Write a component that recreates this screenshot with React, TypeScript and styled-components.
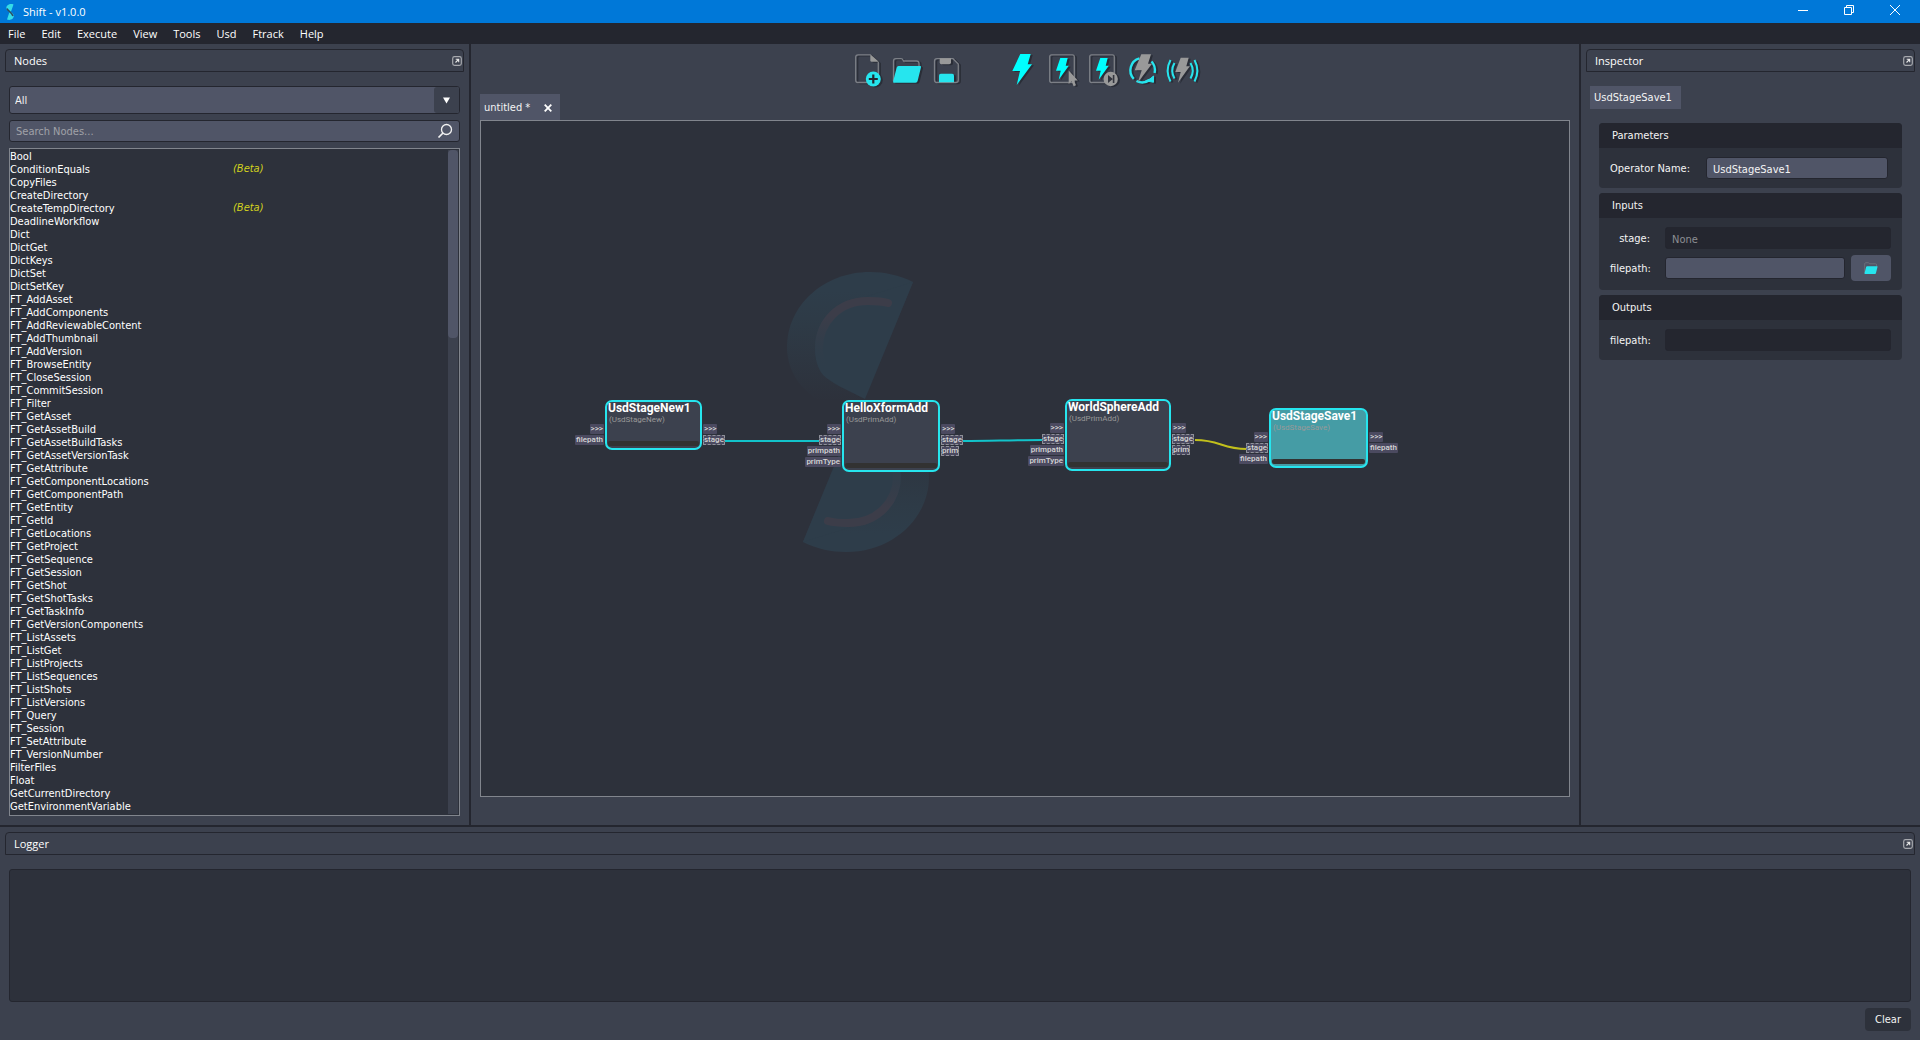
import React from "react";
import styled, { createGlobalStyle, css } from "styled-components";

const c = {
  panel: "#3c414e",
  dark: "#24262f",
  well: "#2d313b",
  field: "#505567",
  line: "#81858d",
  cyan: "#26e5ee",
  neon: "#00ffff",
  grey: "#999999",
  outline: "#7c7f86",
  text: "#f4f4f4",
};
const uiFont = `"Open Sans", "Noto Sans", sans-serif`;
const formFont = `"DejaVu Sans Condensed", "DejaVu Sans", sans-serif`;
const nodeFont = `Roboto, sans-serif`;

const Global = createGlobalStyle`
  *, *::before, *::after { box-sizing: border-box; }
  body { margin: 0; background: ${c.panel}; }
  button, input, select, textarea { font: inherit; color: inherit; margin: 0; }
  button { cursor: pointer; }
`;

const Window = styled.div`
  display: grid;
  grid-template-rows: auto auto minmax(0, 1fr) auto;
  height: 100vh;
  background: ${c.panel};
  color: ${c.text};
  font: 11px/16px ${formFont};
`;

/* ---------- window chrome ---------- */
const TitleBar = styled.header`
  display: flex;
  align-items: center;
  height: 23px;
  padding: 0 2px 0 4px;
  background: #0078d8;
  font: 11px/16px ${uiFont};
`;
const AppTitle = styled.h1`
  flex: 1;
  margin: 0 0 0 7px;
  font: inherit;
  color: #ffffff;
`;
const WindowButton = styled.button`
  display: grid;
  place-items: center;
  align-self: flex-start;
  width: 46px;
  height: 20px;
  padding: 0;
  border: 0;
  background: transparent;
`;
const MenuBar = styled.nav`
  display: flex;
  height: 21px;
  background: ${c.dark};
`;
const MenuItem = styled.button`
  padding: 0 8px;
  border: 0;
  background: transparent;
  font: 11px/20px ${uiFont};
  color: #ffffff;
`;

/* ---------- docks ---------- */
const Workspace = styled.div`
  display: grid;
  grid-template-columns: 471px minmax(0, 1fr) 341px;
  min-height: 0;
  border-bottom: 2px solid ${c.dark};
`;
const Dock = styled.section<{ $edge?: "left" | "right" }>`
  display: flex;
  flex-direction: column;
  min-width: 0;
  min-height: 0;
  padding: 5px;
  ${(p) => p.$edge === "left" && css`border-right: 2px solid ${c.dark};`}
  ${(p) => p.$edge === "right" && css`border-left: 2px solid ${c.dark};`}
`;
const DockHeader = styled.div`
  display: flex;
  align-items: center;
  justify-content: space-between;
  flex: none;
  height: 23px;
  padding: 0 1px 0 8px;
  border: 1px solid ${c.dark};
  border-radius: 4px 4px 0 0;
`;
const DockTitle = styled.h2`
  margin: 0;
  padding-top: 1px;
  font: 11px/16px ${uiFont};
  color: #ffffff;
`;
const FloatButton = styled.button`
  display: block;
  padding: 0;
  border: 0;
  background: transparent;
  line-height: 0;
`;

/* ---------- node browser ---------- */
const Browser = styled.div`
  display: flex;
  flex-direction: column;
  flex: 1;
  gap: 6px;
  min-height: 0;
  padding: 14px 4px 4px;
`;
const Combo = styled.div`
  display: grid;
  grid-template-columns: minmax(0, 1fr) 25px;
  height: 28px;
  border: 1px solid ${c.dark};
  border-radius: 3px;
  background: ${c.field};
  overflow: hidden;
`;
const ComboSelect = styled.select`
  grid-area: 1 / 1 / 2 / 3;
  padding: 1px 5px 0;
  border: 0;
  background: transparent;
  appearance: none;
`;
const ComboArrow = styled.span`
  grid-area: 1 / 2;
  display: grid;
  place-items: center;
  border-radius: 3px 0 0 3px;
  background: ${c.panel};
  pointer-events: none;
`;
const SearchBox = styled.div`
  display: flex;
  align-items: center;
  height: 22px;
  padding-right: 6px;
  border: 1px solid ${c.dark};
  border-radius: 3px;
  background: ${c.field};
`;
const SearchInput = styled.input`
  flex: 1;
  min-width: 0;
  padding: 2px 6px 0;
  border: 0;
  outline: 0;
  background: transparent;
  &::placeholder { color: #a0a2a8; opacity: 1; }
`;
const ListFrame = styled.div`
  display: flex;
  flex: 1;
  min-height: 0;
  border: 1px solid ${c.line};
  background: ${c.well};
`;
const NodeList = styled.ul`
  flex: 1;
  margin: 0;
  padding: 1px 0 0;
  overflow: hidden;
  list-style: none;
  line-height: 14px;
`;
const NodeRow = styled.li`
  display: grid;
  grid-template-columns: 223px 1fr;
  height: 13px;
  white-space: nowrap;
  color: #ffffff;
`;
const Beta = styled.em`
  color: #d2d21e;
  line-height: 12px;
`;
const ScrollTrack = styled.div`
  flex: none;
  width: 10px;
  margin: 1px;
  background: ${c.panel};
`;
const ScrollThumb = styled.div`
  height: 188px;
  border-radius: 4px;
  background: ${c.field};
`;

/* ---------- editor ---------- */
const Editor = styled.main`
  display: flex;
  flex-direction: column;
  min-width: 0;
  padding: 6px 9px 28px;
`;
const Toolbar = styled.div`
  display: flex;
  justify-content: center;
  gap: 34px;
`;
const ToolGroup = styled.div`
  display: flex;
`;
const ToolButton = styled.button`
  width: 40px;
  height: 40px;
  padding: 0;
  border: 0;
  background: transparent;
  line-height: 0;
  svg { filter: drop-shadow(2px 1px 0 rgba(20, 22, 28, 0.45)); }
`;
const Tabs = styled.div`
  display: flex;
  margin-top: 4px;
`;
const Tab = styled.div`
  display: flex;
  align-items: center;
  gap: 14px;
  height: 26px;
  padding: 1px 8px 0 4px;
  background: ${c.field};
`;
const TabClose = styled.button`
  display: block;
  padding: 0;
  border: 0;
  background: transparent;
  line-height: 0;
`;
const Canvas = styled.div`
  position: relative;
  flex: 1;
  min-height: 0;
  border: 1px solid ${c.line};
  background: ${c.well};
  overflow: hidden;
  font-family: ${nodeFont};
`;
const Scene = styled.svg`
  position: absolute;
  inset: 0;
  width: 100%;
  height: 100%;
`;
const GraphNode = styled.article<{ $x: number; $y: number; $w: number; $h: number; $selected?: boolean }>`
  position: absolute;
  left: ${(p) => p.$x}px;
  top: ${(p) => p.$y}px;
  width: ${(p) => p.$w}px;
  height: ${(p) => p.$h}px;
  display: flex;
  flex-direction: column;
  padding: 0 1px 2px;
  border: 2px solid ${c.cyan};
  border-radius: 7px;
  background: ${(p) => (p.$selected ? "#459ca5" : c.panel)};
`;
const NodeTitle = styled.h3`
  margin: 0;
  font: bold 12px/12px ${nodeFont};
  color: #ffffff;
  white-space: nowrap;
`;
const NodeKind = styled.span`
  padding-left: 1px;
  font-size: 8px;
  line-height: 12px;
  color: ${c.grey};
`;
const NodeProgress = styled.div`
  height: 5px;
  margin-top: auto;
  border-radius: 2px;
  background: #323232;
`;
const Ports = styled.div<{ $side: "in" | "out" }>`
  position: absolute;
  top: 22px;
  display: flex;
  flex-direction: column;
  gap: 1px;
  ${(p) =>
    p.$side === "in"
      ? css`right: 100%; margin-right: 3px; align-items: flex-end;`
      : css`left: 100%; margin-left: 3px; align-items: flex-start;`}
`;
const Port = styled.span<{ $linked?: boolean }>`
  height: 10px;
  padding: 0 1px;
  border-radius: 1px;
  background: #4b4a60;
  font-size: 8px;
  line-height: 10px;
  font-weight: 500;
  color: #d6d6d6;
  white-space: nowrap;
  ${(p) => p.$linked && css`outline: 1px dashed #90929a; outline-offset: -1px;`}
`;

/* ---------- inspector ---------- */
const InspectorBody = styled.div`
  display: flex;
  flex-direction: column;
  align-items: flex-start;
  gap: 14px;
  padding: 14px 13px 0 4px;
`;
const InspectorTab = styled.button`
  height: 23px;
  padding: 1px 9px 0 4px;
  border: 0;
  background: ${c.field};
`;
const Groups = styled.div`
  display: flex;
  flex-direction: column;
  align-self: stretch;
  gap: 5px;
  padding-left: 9px;
`;
const Group = styled.fieldset`
  min-width: 0;
  margin: 0;
  padding: 0;
  border: 0;
  border-radius: 4px;
  background: ${c.well};
  overflow: hidden;
`;
const GroupTitle = styled.legend`
  float: left;
  width: 100%;
  height: 25px;
  padding: 0 13px;
  background: ${c.dark};
  line-height: 26px;
`;
const GroupBody = styled.div`
  clear: both;
  display: flex;
  flex-direction: column;
  gap: 6px;
  padding: 9px 11px;
`;
const Field = styled.div<{ $labelWidth: number; $gap: number }>`
  display: grid;
  grid-template-columns: ${(p) => p.$labelWidth}px minmax(0, 1fr);
  align-items: center;
  column-gap: ${(p) => p.$gap}px;
`;
const FieldLabel = styled.label`
  padding-top: 2px;
  text-align: right;
  white-space: nowrap;
`;
const Control = styled.div<{ $inset?: boolean }>`
  display: flex;
  align-items: center;
  gap: 6px;
  padding-right: ${(p) => (p.$inset ? 3 : 0)}px;
`;
const TextInput = styled.input`
  flex: 1;
  min-width: 0;
  height: 22px;
  padding: 2px 6px 0;
  border: 1px solid ${c.dark};
  border-radius: 3px;
  background: ${c.field};
  outline: 0;
  &:read-only { background: ${c.dark}; color: #8c8e93; }
`;
const BrowseButton = styled.button`
  display: grid;
  place-items: center;
  width: 40px;
  height: 26px;
  padding: 0;
  border: 0;
  border-radius: 4px;
  background: ${c.field};
`;

/* ---------- logger ---------- */
const LoggerBody = styled.div`
  display: flex;
  flex-direction: column;
  align-items: flex-end;
  gap: 6px;
  padding: 14px 4px 4px;
`;
const Log = styled.textarea`
  display: block;
  width: 100%;
  height: 133px;
  border: 1px solid ${c.dark};
  border-radius: 3px;
  background: ${c.well};
  resize: none;
  outline: 0;
`;
const ClearButton = styled.button`
  height: 23px;
  padding: 0 10px;
  border: 0;
  border-radius: 4px;
  background: ${c.well};
`;

/* ---------- drawings ---------- */
const AppMark = () => (
  <svg width="12" height="18" viewBox="0 0 12 18" aria-hidden="true">
    <path d="M9.5 1.5C6 .3 2 2 2.400 5.500C2.600 7.500 5 8.500 6.500 10z" fill="#35dce8" />
    <path d="M3 16.500C6.500 17.700 10 16 9.800 12.500C9.600 10.500 7.500 9.500 5.800 8z" fill="#35dce8" />
    <path d="M3 5.500C4 8.500 8 9 9 13" stroke="#2c4b66" strokeWidth="1.600" fill="none" />
  </svg>
);
const FloatIcon = () => (
  <svg width="10" height="10" viewBox="0 0 10 10" aria-hidden="true">
    <rect x=".7" y=".7" width="8.600" height="8.600" rx="1.800" fill="none" stroke="#a7a9ae" strokeWidth="1.200" />
    <path d="M3.700 3.300H6.700V6.300M6.500 3.500 3.500 6.500" fill="none" stroke="#e6e6e6" strokeWidth="1.100" />
  </svg>
);
const SearchIcon = () => (
  <svg width="16" height="16" viewBox="0 0 16 16" fill="none" stroke="#f2f2f2" strokeWidth="1.300" aria-hidden="true">
    <circle cx="9.500" cy="6.500" r="5" />
    <path d="M6 10 1.500 14.500" strokeWidth="1.700" />
  </svg>
);
const NewIcon = () => (
  <svg width="40" height="40" viewBox="0 0 40 40" aria-hidden="true">
    <path d="M22.500 4.800H10Q7.700 4.800 7.700 7.100V30.200Q7.700 32.500 10 32.500H28Q30.300 32.500 30.300 30.200V12" fill="none" stroke={c.outline} strokeWidth="1.300" />
    <path d="M22.300 4.300 30.800 11.700H23.800Q22.300 11.700 22.300 10.200z" fill={c.grey} />
    <circle cx="25.300" cy="29" r="7.500" fill={c.cyan} />
    <path d="M25.300 24.500v9M20.800 29h9" stroke={c.dark} strokeWidth="2.200" />
  </svg>
);
const FolderShape = () => (
  <>
    <path d="M5.500 31V11Q5.500 8.700 7.800 8.700H13Q14.500 8.700 15 10L15.500 11H28.500Q31 11 31 13.500V17" fill="none" stroke={c.outline} strokeWidth="1.300" />
    <path d="M10.500 16H32Q33.400 16 33 17.300L29.600 31Q29.200 32.700 27.500 32.700H6Q4.800 32.700 5.100 31.500L8.700 17.500Q9.100 16 10.500 16z" fill={c.cyan} />
  </>
);
const OpenIcon = () => (
  <svg width="40" height="40" viewBox="0 0 40 40" aria-hidden="true"><FolderShape /></svg>
);
const SmallFolderIcon = () => (
  <svg width="14" height="14" viewBox="4 5 30 30" aria-hidden="true"><FolderShape /></svg>
);
const SaveIcon = () => (
  <svg width="40" height="40" viewBox="0 0 40 40" aria-hidden="true">
    <path d="M9 8.700H25L30.300 14V30Q30.300 32.500 27.800 32.500H9Q6.500 32.500 6.500 30V11.200Q6.500 8.700 9 8.700z" fill="none" stroke={c.outline} strokeWidth="1.300" />
    <path d="M11.700 8.300H23V12.500Q23 14.300 21.200 14.300H13.500Q11.700 14.300 11.700 12.500z" fill={c.grey} />
    <path d="M11 25.500Q11 23.700 12.800 23.700H24.200Q26 23.700 26 25.500V32.300H11z" fill={c.cyan} />
  </svg>
);
const RunIcon = () => (
  <svg width="40" height="40" viewBox="0 0 40 40" aria-hidden="true">
    <path d="M18.300 4H28.700L25.700 14.300H30L14.700 35 18 21H10.300z" fill={c.neon} />
  </svg>
);
const FramedBolt = () => (
  <>
    <rect x="7.700" y="4.800" width="24.600" height="27.700" rx="2" fill="none" stroke={c.outline} strokeWidth="1.300" />
    <path d="M18.300 8H25.700L23.700 15.700H26.800L16.700 29.700 18.700 20.700H14z" fill={c.neon} />
  </>
);
const RunSelectedIcon = () => (
  <svg width="40" height="40" viewBox="0 0 40 40" aria-hidden="true">
    <FramedBolt />
    <path d="M26.700 20.500V34L29.600 31.300 31.600 36.200 34 35.200 32 30.500H35.800z" fill={c.grey} />
  </svg>
);
const RunToIcon = () => (
  <svg width="40" height="40" viewBox="0 0 40 40" aria-hidden="true">
    <FramedBolt />
    <circle cx="28.700" cy="29" r="7.200" fill={c.grey} />
    <path d="M26 25V33L30.800 29zM30.800 25h1.600v8h-1.600z" fill="#34363f" />
  </svg>
);
const RerunIcon = () => (
  <svg width="40" height="40" viewBox="0 0 40 40" aria-hidden="true">
    <path d="M17.500 8.400A12.300 12.300 0 0 0 11.800 28.800M14.500 31Q21 34.500 28 30M29.500 11.500Q34 16 32.600 23" fill="none" stroke={c.cyan} strokeWidth="2.400" />
    <path d="M31.500 26V32.300L23.500 30.800Q28.500 29.500 31.500 26z" fill={c.cyan} stroke={c.cyan} />
    <path d="M19.300 4.300H29L26 13.700H30L15.700 32.700 19.700 20.300H12.700z" fill={c.grey} />
  </svg>
);
const LiveIcon = () => (
  <svg width="40" height="40" viewBox="0 0 40 40" aria-hidden="true">
    <path d="M8.500 10Q2.800 20.500 8.500 31.500M12.500 13Q8 20.500 12.500 28.500M32.500 10Q38.200 20.500 32.500 31.500M28.500 13Q33 20.500 28.500 28.500" fill="none" stroke={c.cyan} strokeWidth="2" />
    <path d="M18.700 7.700H26.700L24.300 16.300H27.800L16 32.700 18.700 22H13.300z" fill={c.grey} />
  </svg>
);

/* One wing of the watermark; the second is the same wing turned half a circle. */
const WatermarkWing = () => (
  <>
    <path d="M432 161C418 154 403 151 389 151C342 151 306 185 306 226C306 252 322 274 351 287L384 278z" fill="url(#ring)" />
    <path d="M432 161L384 278C366 269 350 262 342 254C336 246 334 238 334 227C334 200 352 178 384 176z" fill="#2e3d4a" />
    <path d="M407 182C400 180 393 180 387 180C357 180 338 202 338 227C338 242 345 254 356 262" fill="none" stroke="url(#groove)" strokeWidth="8" strokeLinecap="round" />
  </>
);

type PortSpec = [string, boolean?];
type NodeSpec = {
  title: string; kind: string; x: number; y: number; w: number; h: number; selected?: boolean;
  ins: PortSpec[]; outs: PortSpec[];
};
const graph: NodeSpec[] = [
  { title: "UsdStageNew1", kind: "UsdStageNew", x: 124, y: 279, w: 97, h: 50, ins: [[">>>"], ["filepath"]], outs: [[">>>"], ["stage", true]] },
  { title: "HelloXformAdd", kind: "UsdPrimAdd", x: 361, y: 279, w: 98, h: 72, ins: [[">>>"], ["stage", true], ["primpath"], ["primType"]], outs: [[">>>"], ["stage", true], ["prim", true]] },
  { title: "WorldSphereAdd", kind: "UsdPrimAdd", x: 584, y: 278, w: 106, h: 72, ins: [[">>>"], ["stage", true], ["primpath"], ["primType"]], outs: [[">>>"], ["stage", true], ["prim", true]] },
  { title: "UsdStageSave1", kind: "UsdStageSave", x: 788, y: 287, w: 99, h: 60, selected: true, ins: [[">>>"], ["stage", true], ["filepath"]], outs: [[">>>"], ["filepath"]] },
];

const menus = ["File", "Edit", "Execute", "View", "Tools", "Usd", "Ftrack", "Help"];
const betaNodes = new Set(["ConditionEquals", "CreateTempDirectory"]);
const nodeTypes = `Bool ConditionEquals CopyFiles CreateDirectory CreateTempDirectory DeadlineWorkflow Dict DictGet DictKeys DictSet DictSetKey
FT_AddAsset FT_AddComponents FT_AddReviewableContent FT_AddThumbnail FT_AddVersion FT_BrowseEntity FT_CloseSession FT_CommitSession FT_Filter
FT_GetAsset FT_GetAssetBuild FT_GetAssetBuildTasks FT_GetAssetVersionTask FT_GetAttribute FT_GetComponentLocations FT_GetComponentPath FT_GetEntity
FT_GetId FT_GetLocations FT_GetProject FT_GetSequence FT_GetSession FT_GetShot FT_GetShotTasks FT_GetTaskInfo FT_GetVersionComponents FT_ListAssets
FT_ListGet FT_ListProjects FT_ListSequences FT_ListShots FT_ListVersions FT_Query FT_Session FT_SetAttribute FT_VersionNumber FilterFiles Float
GetCurrentDirectory GetEnvironmentVariable`.split(/\s+/);

const fileTools = [
  { label: "New workflow", Icon: NewIcon },
  { label: "Open workflow", Icon: OpenIcon },
  { label: "Save workflow", Icon: SaveIcon },
];
const runTools = [
  { label: "Execute", Icon: RunIcon },
  { label: "Execute selected", Icon: RunSelectedIcon },
  { label: "Execute up to node", Icon: RunToIcon },
  { label: "Execute again", Icon: RerunIcon },
  { label: "Live execution", Icon: LiveIcon },
];

const Header = ({ title }: { title: string }) => (
  <DockHeader>
    <DockTitle>{title}</DockTitle>
    <FloatButton aria-label={`Float ${title}`}><FloatIcon /></FloatButton>
  </DockHeader>
);
const Tools = ({ items }: { items: typeof fileTools }) => (
  <ToolGroup>
    {items.map(({ label, Icon }) => (
      <ToolButton key={label} aria-label={label}><Icon /></ToolButton>
    ))}
  </ToolGroup>
);
const PortList = ({ side, ports }: { side: "in" | "out"; ports: PortSpec[] }) => (
  <Ports $side={side}>
    {ports.map(([name, linked]) => <Port key={name} $linked={linked}>{name}</Port>)}
  </Ports>
);

export default function App() {
  return (
    <Window>
      <Global />
      <TitleBar>
        <AppMark />
        <AppTitle>Shift - v1.0.0</AppTitle>
        <WindowButton aria-label="Minimize">
          <svg width="10" height="10"><path d="M0 5.500h10" stroke="#fff" /></svg>
        </WindowButton>
        <WindowButton aria-label="Restore">
          <svg width="10" height="10" fill="none" stroke="#fff"><path d="M.5 2.500h7v7h-7zM2.500 2.500v-2h7v7h-2" /></svg>
        </WindowButton>
        <WindowButton aria-label="Close">
          <svg width="10" height="10" stroke="#fff"><path d="M0 0 10 10M10 0 0 10" /></svg>
        </WindowButton>
      </TitleBar>
      <MenuBar>
        {menus.map((m) => <MenuItem key={m}>{m}</MenuItem>)}
      </MenuBar>

      <Workspace>
        <Dock $edge="left">
          <Header title="Nodes" />
          <Browser>
            <Combo>
              <ComboSelect aria-label="Category" defaultValue="All"><option>All</option></ComboSelect>
              <ComboArrow><svg width="7" height="7"><path d="M0 .5h7L3.500 6.500z" fill="#fff" /></svg></ComboArrow>
            </Combo>
            <SearchBox>
              <SearchInput aria-label="Search nodes" placeholder="Search Nodes..." />
              <SearchIcon />
            </SearchBox>
            <ListFrame>
              <NodeList>
                {nodeTypes.map((n) => (
                  <NodeRow key={n}>
                    <span>{n}</span>
                    {betaNodes.has(n) && <Beta>(Beta)</Beta>}
                  </NodeRow>
                ))}
              </NodeList>
              <ScrollTrack><ScrollThumb /></ScrollTrack>
            </ListFrame>
          </Browser>
        </Dock>

        <Editor>
          <Toolbar>
            <Tools items={fileTools} />
            <Tools items={runTools} />
          </Toolbar>
          <Tabs>
            <Tab>
              <span>untitled *</span>
              <TabClose aria-label="Close untitled">
                <svg width="8" height="8"><path d="M.7.7 7.300 7.300M7.300.7.7 7.300" stroke="#fff" strokeWidth="1.800" /></svg>
              </TabClose>
            </Tab>
          </Tabs>
          <Canvas>
            <Scene aria-hidden="true">
              <defs>
                <linearGradient id="ring" gradientUnits="userSpaceOnUse" x1="0" y1="170" x2="0" y2="280">
                  <stop offset="0" stopColor="#2e3d4a" />
                  <stop offset="0.250" stopColor="#2e3b47" />
                  <stop offset="1" stopColor={c.well} />
                </linearGradient>
                <linearGradient id="groove" gradientUnits="userSpaceOnUse" x1="0" y1="195" x2="0" y2="250">
                  <stop offset="0" stopColor="#3c3d49" />
                  <stop offset="1" stopColor="#2e3d4a" stopOpacity="0" />
                </linearGradient>
              </defs>
              <WatermarkWing />
              <g transform="rotate(180 377 291)"><WatermarkWing /></g>
              <g fill="none" strokeWidth="2">
                <path d="M244 320H338M482 320C510 320 530 319 562 319" stroke="#12c3ca" />
                <path d="M714 319C740 319 740 328 766 328" stroke="#c2c01c" />
              </g>
            </Scene>
            {graph.map((n) => (
              <GraphNode key={n.title} $x={n.x} $y={n.y} $w={n.w} $h={n.h} $selected={n.selected}>
                <NodeTitle>{n.title}</NodeTitle>
                <NodeKind>({n.kind})</NodeKind>
                <NodeProgress />
                <PortList side="in" ports={n.ins} />
                <PortList side="out" ports={n.outs} />
              </GraphNode>
            ))}
          </Canvas>
        </Editor>

        <Dock $edge="right">
          <Header title="Inspector" />
          <InspectorBody>
            <InspectorTab>UsdStageSave1</InspectorTab>
            <Groups>
              <Group>
                <GroupTitle>Parameters</GroupTitle>
                <GroupBody>
                  <Field $labelWidth={78} $gap={18}>
                    <FieldLabel htmlFor="op-name">Operator Name:</FieldLabel>
                    <Control $inset><TextInput id="op-name" defaultValue="UsdStageSave1" /></Control>
                  </Field>
                </GroupBody>
              </Group>
              <Group>
                <GroupTitle>Inputs</GroupTitle>
                <GroupBody>
                  <Field $labelWidth={40} $gap={15}>
                    <FieldLabel htmlFor="in-stage">stage:</FieldLabel>
                    <Control><TextInput id="in-stage" value="None" readOnly /></Control>
                  </Field>
                  <Field $labelWidth={40} $gap={15}>
                    <FieldLabel htmlFor="in-filepath">filepath:</FieldLabel>
                    <Control>
                      <TextInput id="in-filepath" />
                      <BrowseButton aria-label="Browse"><SmallFolderIcon /></BrowseButton>
                    </Control>
                  </Field>
                </GroupBody>
              </Group>
              <Group>
                <GroupTitle>Outputs</GroupTitle>
                <GroupBody>
                  <Field $labelWidth={40} $gap={15}>
                    <FieldLabel htmlFor="out-filepath">filepath:</FieldLabel>
                    <Control><TextInput id="out-filepath" value="" readOnly /></Control>
                  </Field>
                </GroupBody>
              </Group>
            </Groups>
          </InspectorBody>
        </Dock>
      </Workspace>

      <Dock>
        <Header title="Logger" />
        <LoggerBody>
          <Log aria-label="Log output" readOnly />
          <ClearButton>Clear</ClearButton>
        </LoggerBody>
      </Dock>
    </Window>
  );
}
